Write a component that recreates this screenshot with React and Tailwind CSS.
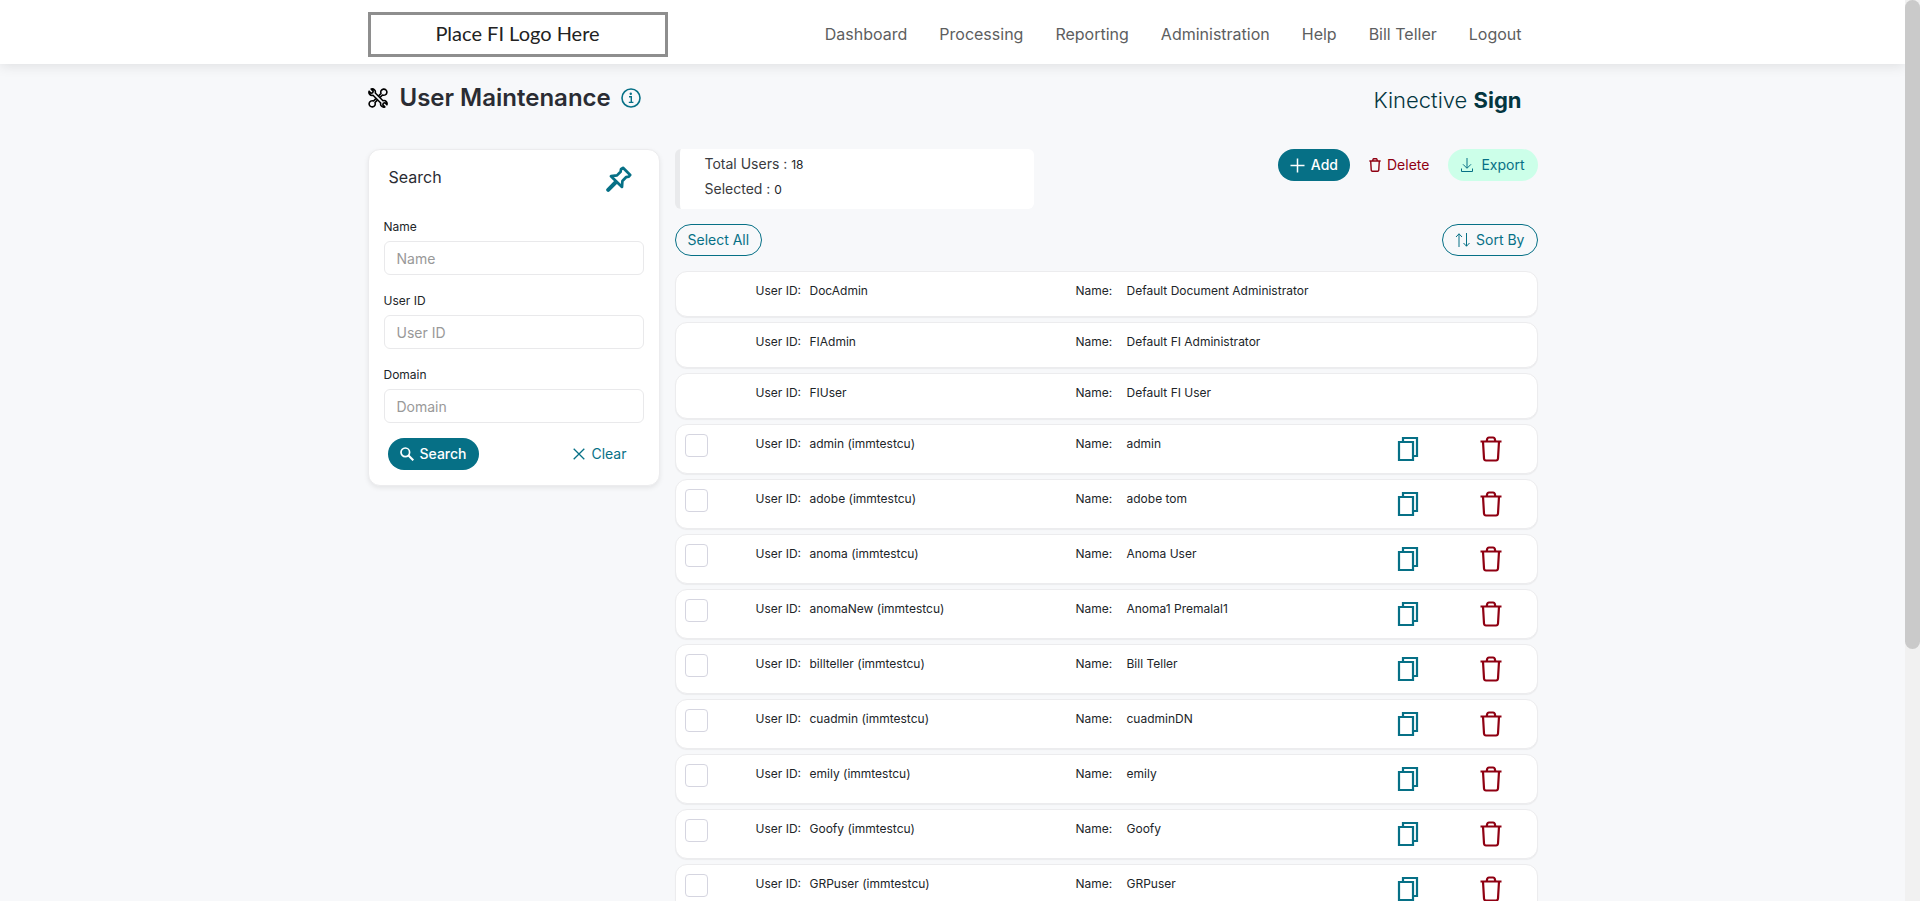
import React, { useState } from 'react';

const navItems = ['Dashboard', 'Processing', 'Reporting', 'Administration', 'Help', 'Bill Teller', 'Logout'];

const users = [
  { id: 'DocAdmin', name: 'Default Document Administrator', builtIn: true },
  { id: 'FIAdmin', name: 'Default FI Administrator', builtIn: true },
  { id: 'FIUser', name: 'Default FI User', builtIn: true },
  { id: 'admin (immtestcu)', name: 'admin' },
  { id: 'adobe (immtestcu)', name: 'adobe tom' },
  { id: 'anoma (immtestcu)', name: 'Anoma User' },
  { id: 'anomaNew (immtestcu)', name: 'Anoma1 Premalal1' },
  { id: 'billteller (immtestcu)', name: 'Bill Teller' },
  { id: 'cuadmin (immtestcu)', name: 'cuadminDN' },
  { id: 'emily (immtestcu)', name: 'emily' },
  { id: 'Goofy (immtestcu)', name: 'Goofy' },
  { id: 'GRPuser (immtestcu)', name: 'GRPuser' },
];

const TOTAL_USERS = 18;

/** --- ICONS --- **/
const ToolsIcon = () => (
  <svg className="w-5 h-5" viewBox="0 0 20 20" fill="none" stroke="#000" strokeWidth="1.6" strokeLinejoin="round">
    <path d="M3.2 1.100 5.200 3.100 4.700 4.700 3.100 5.200 1.100 3.200C.3 5.600 2.300 8 5 7.300L12.700 15C12 17.700 14.400 19.700 16.800 18.900L14.800 16.900 15.300 15.300 16.900 14.800 18.900 16.800C19.700 14.400 17.700 12 15 12.700L7.300 5C8 2.300 5.600.3 3.200 1.100Z" />
    <path d="M10.600 7.900 13 5.500A3.100 3.100 0 1 1 14.500 7L12.100 9.400M9.400 12.100 7 14.500A3.100 3.100 0 1 1 5.500 13L7.900 10.600" />
  </svg>
);

const InfoIcon = () => (
  <svg className="w-5 h-5" viewBox="0 0 20 20" fill="none" stroke="#067086">
    <circle cx="10" cy="10" r="9" strokeWidth="1.600" />
    <circle cx="9.800" cy="5.700" r="1.200" fill="#067086" stroke="none" />
    <path d="M8 8.800h2.300v5.400M7.800 14.400h4.600" strokeWidth="1.400" />
  </svg>
);

const PinIcon = () => (
  <svg className="w-[26px] h-[26px]" viewBox="0 0 26 26" fill="none" stroke="#067086" strokeWidth="2.700" strokeLinejoin="round" strokeLinecap="round">
    <path d="M17 1.800 24.200 9 22.800 10.700 20 11.200 16.400 15 16 21 5 10.200 11 9.400 14.600 5.800 15 3.200Z" />
    <path d="M9.500 16.500 2.200 23.800" strokeWidth="4" />
  </svg>
);

const SearchIcon = () => (
  <svg className="w-3.5 h-3.5" viewBox="0 0 14 14" fill="none" stroke="currentColor">
    <circle cx="5.300" cy="5.300" r="4.300" strokeWidth="1.700" />
    <path d="m8.500 8.500 4.800 4.800" strokeWidth="2.100" />
  </svg>
);

const CloseIcon = () => (
  <svg className="w-3 h-3" viewBox="0 0 12 12" fill="none" stroke="currentColor" strokeWidth="1.300">
    <path d="m.7.700 10.600 10.600M11.300.7.700 11.300" />
  </svg>
);

const PlusIcon = () => (
  <svg className="w-[15px] h-[15px]" viewBox="0 0 15 15" fill="none" stroke="currentColor" strokeWidth="1.500">
    <path d="M7.500.5v14M.5 7.500h14" />
  </svg>
);

const TrashIcon = ({ className, stroke }) => (
  <svg className={className} viewBox="0 0 22 26" fill="none" stroke="currentColor" strokeWidth={stroke} strokeLinejoin="round">
    <path d="M.5 5.500h21M3 5.500 4 22.500Q4.200 24.500 6 24.500h10Q17.800 24.500 18 22.500L19 5.500M6.700 5 7.300 2.600Q7.700 1.500 8.800 1.500h4.400Q14.300 1.500 14.700 2.600L15.300 5" />
  </svg>
);

const DownloadIcon = () => (
  <svg className="w-3 h-3.5" viewBox="0 0 12 14" fill="none" stroke="currentColor">
    <path d="M6 0v10M2 6.300 6 10.300 10 6.300M.5 10.500v3h11v-3" />
  </svg>
);

const SortIcon = () => (
  <svg className="w-[15px] h-[14px]" viewBox="0 0 15 14" fill="none" stroke="currentColor">
    <path d="M4 14V.8M1 4 4 .8 7 4M11.500 0v13.200M8.500 10l3 3.200 3-3.200" />
  </svg>
);

const CopyIcon = () => (
  <svg className="w-[22px] h-[26px]" viewBox="0 0 22 26" fill="none" stroke="#067086" strokeWidth="2.200">
    <path d="M2 6h14v18H2ZM6 6V2h14v18h-4" />
  </svg>
);

const Field = ({ id, label }) => (
  <div>
    <label htmlFor={id} className="block text-xs leading-4 text-[#212529] mb-1.5">{label}</label>
    <input
      id={id}
      type="text"
      placeholder={label}
      className="block w-full h-[34px] px-3 text-sm bg-white border border-[#e9e9eb] rounded-md placeholder:text-[#999] focus:outline-none"
    />
  </div>
);

export default function App() {
  const [selected, setSelected] = useState([]);

  const toggle = (id) => {
    setSelected(prev => (prev.includes(id) ? prev.filter(u => u !== id) : [...prev, id]));
  };

  return (
    <div className="flex h-screen overflow-hidden bg-[#f7f8fa] font-['Inter',sans-serif] text-[#212529]">
      <div className="flex-1 min-w-0 overflow-hidden">
        {/* Header */}
        <header className="relative h-16 bg-white shadow-[0_2px_12px_rgba(0,0,0,0.1)]">
          <div className="max-w-[1170px] h-full mx-auto flex items-center justify-between pt-1">
            <a href="#" className="w-[300px] h-[45px] border-3 border-[#8e8e8e] pb-0.5 flex items-center justify-center font-['Lato',sans-serif] text-xl text-[#222]">
              Place FI Logo Here
            </a>
            <nav className="flex gap-8 pr-4 text-base text-[#5d5e60]">
              {navItems.map(item => (
                <a key={item} href="#">{item}</a>
              ))}
            </nav>
          </div>
        </header>

        <main className="max-w-[1170px] mx-auto">
          {/* Title */}
          <div className="flex items-center justify-between pr-4 h-[68px] mb-[17px]">
            <div className="flex items-center">
              <ToolsIcon />
              <h1 className="ml-3 mr-2.5 text-2xl font-semibold text-[#2a2c33]">User Maintenance</h1>
              <InfoIcon />
            </div>
            <div className="pt-1 text-[22px] font-light text-[#04363f]">
              Kinective <span className="font-bold">Sign</span>
            </div>
          </div>

          <div className="flex items-start gap-[15px]">
            {/* Search panel */}
            <form className="w-[292px] shrink-0 bg-white rounded-xl border border-[#ececee] shadow-[0_2px_5px_rgba(0,0,0,0.08)] px-[15px] pb-[15px]" onSubmit={(e) => e.preventDefault()}>
              <div className="flex justify-between pt-4 pl-[5px] pr-3 h-[69px]">
                <h2 className="text-base leading-[22px] text-[#2a2c33]">Search</h2>
                <button type="button" aria-label="Pin" className="self-start"><PinIcon /></button>
              </div>
              <div className="flex flex-col gap-[18px]">
                <Field id="name" label="Name" />
                <Field id="userId" label="User ID" />
                <Field id="domain" label="Domain" />
              </div>
              <div className="mt-[15px] flex items-center justify-between pl-1 pr-[17px]">
                <button className="h-8 px-3 flex items-center gap-1.5 rounded-full bg-[#067086] text-white text-sm font-medium">
                  <SearchIcon /> Search
                </button>
                <button type="reset" className="flex items-center gap-1.5 text-sm text-[#067086]">
                  <CloseIcon /> Clear
                </button>
              </div>
            </form>

            {/* Users */}
            <section className="flex-1 min-w-0">
              <div className="flex items-start justify-between">
                <div className="w-[359px] h-[60px] bg-white rounded-md border-l-5 border-[#e9eaec] pt-0.5 pl-[25px] text-sm leading-[25px] text-[#3a3b40]">
                  <div>Total Users : <span className="text-xs text-[#212529]">{TOTAL_USERS}</span></div>
                  <div>Selected : <span className="text-xs text-[#212529]">{selected.length}</span></div>
                </div>
                <div className="flex items-center text-sm">
                  <button className="h-8 px-3 flex items-center gap-1.5 rounded-full bg-[#067086] text-white font-medium">
                    <PlusIcon /> Add
                  </button>
                  <button className="h-8 px-[19px] flex items-center gap-1.5 text-[#8f0012]">
                    <TrashIcon className="w-3 h-3.5" stroke={2.6} /> Delete
                  </button>
                  <button className="h-8 px-[13px] flex items-center gap-2 rounded-full bg-[#ccffe9] text-[#067086]">
                    <DownloadIcon /> Export
                  </button>
                </div>
              </div>

              <div className="flex justify-between mt-[15px] mb-[15px] text-sm text-[#067086]">
                <button
                  className="h-8 px-3 border border-[#067086] rounded-full"
                  onClick={() => setSelected(users.filter(u => !u.builtIn).map(u => u.id))}
                >
                  Select All
                </button>
                <button className="h-8 px-3 flex items-center gap-1.5 border border-[#067086] rounded-full">
                  <SortIcon /> Sort By
                </button>
              </div>

              <ul className="flex flex-col gap-[5px] text-xs">
                {users.map(user => (
                  <li
                    key={user.id}
                    className={`flex items-start bg-white border border-[#ececee] rounded-xl shadow-[0_1px_1px_rgba(0,0,0,0.05)] pl-[9px] ${user.builtIn ? 'h-[46px]' : 'h-[50px]'}`}
                  >
                    <div className="w-[71px] pt-[9px]">
                      {!user.builtIn && (
                        <input
                          type="checkbox"
                          aria-label={user.id}
                          checked={selected.includes(user.id)}
                          onChange={() => toggle(user.id)}
                          className="block appearance-none w-[23px] h-[23px] bg-white border border-[#d5d5e0] rounded checked:bg-[#067086]"
                        />
                      )}
                    </div>
                    <div className="flex w-80 pt-[11px]">
                      <span className="w-[54px]">User ID:</span>
                      <span>{user.id}</span>
                    </div>
                    <div className="flex flex-1 pt-[11px]">
                      <span className="w-[51px]">Name:</span>
                      <span>{user.name}</span>
                    </div>
                    {!user.builtIn && (
                      <div className="flex gap-[61px] pt-[11px] pr-[35px]">
                        <button aria-label="Copy"><CopyIcon /></button>
                        <button aria-label="Delete" className="text-[#8f0012]">
                          <TrashIcon className="w-[22px] h-[26px]" stroke={2.2} />
                        </button>
                      </div>
                    )}
                  </li>
                ))}
              </ul>
            </section>
          </div>
        </main>
      </div>

      {/* Scrollbar */}
      <div className="w-[15px] shrink-0 bg-[#f1f1f1]">
        <div className="h-[72%] rounded-full bg-[#cacaca]" />
      </div>
    </div>
  );
}
